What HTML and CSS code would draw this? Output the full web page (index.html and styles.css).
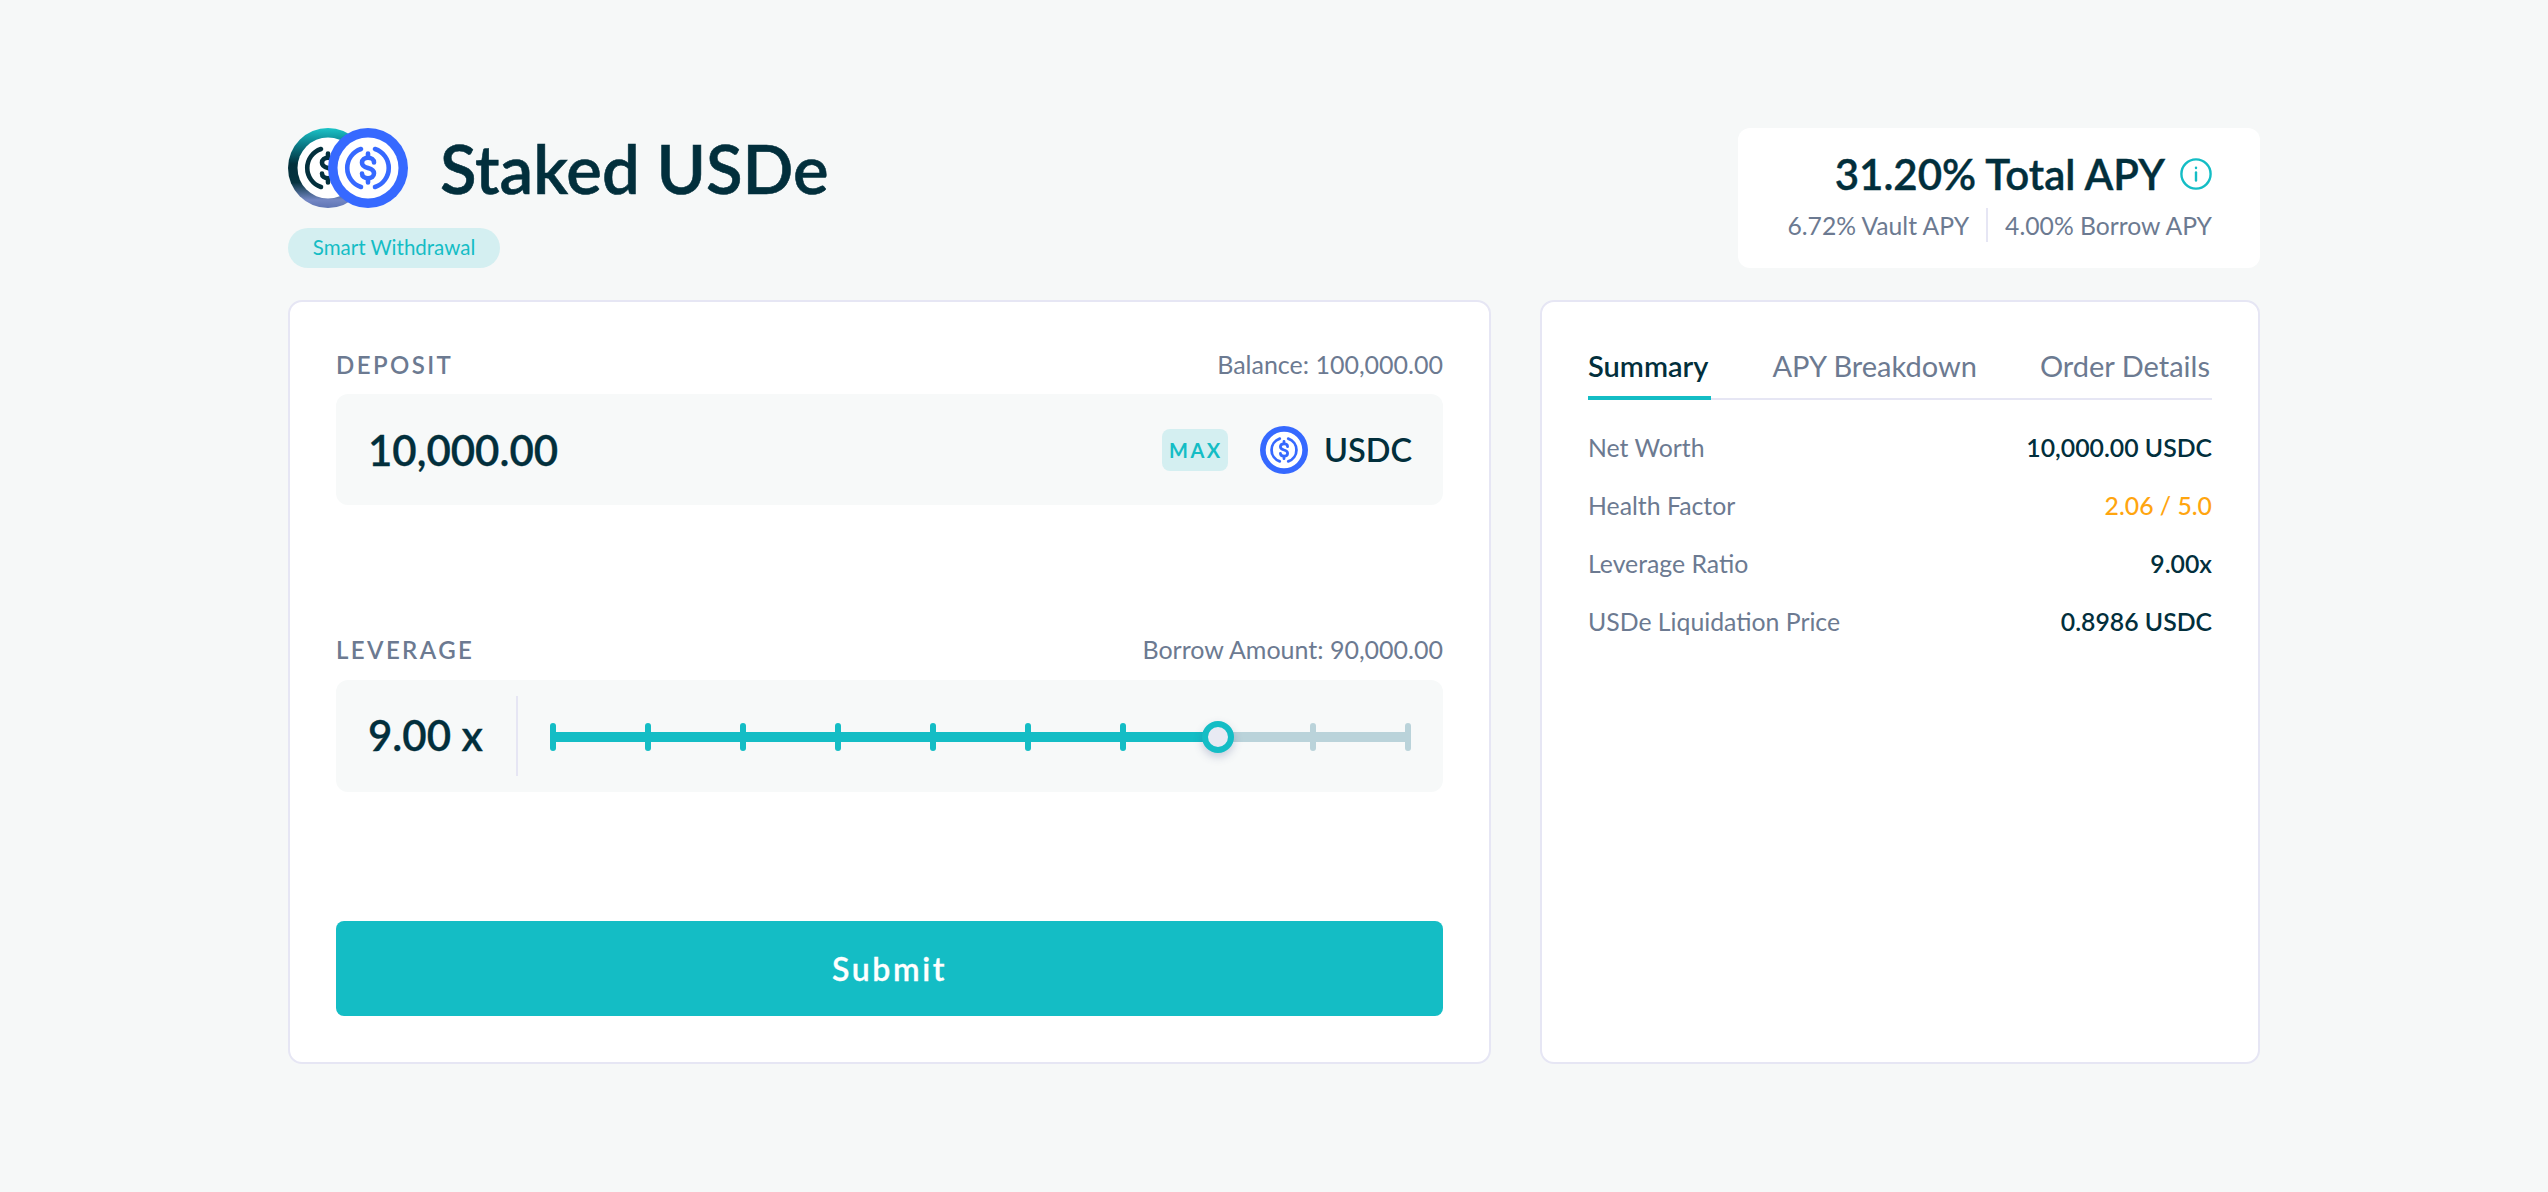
FILE: index.html
```html
<!DOCTYPE html>
<html lang="en">
<head>
    <meta charset="UTF-8">
    <meta name="viewport" content="width=device-width, initial-scale=1.0">
    <title>Staked USDe</title>
    <link rel="stylesheet" href="styles.css">
</head>
<body>
    <svg class="defs" width="0" height="0">
        <defs>
            <linearGradient id="ringGrad" x1="0" y1="0" x2="0" y2="1">
                <stop offset="0" stop-color="#1cc4c8"/>
                <stop offset="0.2" stop-color="#0b7f8b"/>
                <stop offset="0.45" stop-color="#02303c"/>
                <stop offset="0.68" stop-color="#06333f"/>
                <stop offset="0.9" stop-color="#7487c4"/>
                <stop offset="1" stop-color="#5f75b4"/>
            </linearGradient>
            <symbol id="usdc" viewBox="0 0 80 80">
                <circle cx="40" cy="40" r="40" fill="#3669ff"/>
                <circle cx="40" cy="40" r="30.5" fill="#fff"/>
                <g fill="none" stroke="#3669ff" stroke-width="4.6" stroke-linecap="round">
                    <path d="M33 21 A20 20 0 0 0 33 59"/>
                    <path d="M47 21 A20 20 0 0 1 47 59"/>
                    <path d="M46 34.5 C46 31.5 43.5 29.8 40 29.8 C36.5 29.8 34 31.5 34 34.7 C34 38 37 39.2 40 40 C43 40.8 46 42 46 45.3 C46 48.5 43.5 50.2 40 50.2 C36.5 50.2 34 48.5 34 45.5"/>
                    <path d="M40 25.5 V29 M40 51 V54.5"/>
                </g>
            </symbol>
            <symbol id="susde" viewBox="0 0 80 80">
                <circle cx="40" cy="40" r="40" fill="url(#ringGrad)"/>
                <circle cx="40" cy="40" r="30.5" fill="#fff"/>
                <g fill="none" stroke="#04303d" stroke-width="4.6" stroke-linecap="round">
                    <path d="M33 21 A20 20 0 0 0 33 59"/>
                    <path d="M46 34.5 C46 31.5 43.5 29.8 40 29.8 C36.5 29.8 34 31.5 34 34.7 C34 38 37 39.2 40 40 C43 40.8 46 42 46 45.3 C46 48.5 43.5 50.2 40 50.2 C36.5 50.2 34 48.5 34 45.5"/>
                    <path d="M40 25.5 V29 M40 51 V54.5"/>
                </g>
            </symbol>
        </defs>
    </svg>

    <div class="page">
        <!-- Header: vault name and APY card -->
        <header class="top">
            <div class="vault">
                <div class="vault-name">
                    <div class="coins">
                        <svg class="coin"><use href="#susde"/></svg>
                        <svg class="coin coin-front"><use href="#usdc"/></svg>
                    </div>
                    <h1>Staked USDe</h1>
                </div>
                <span class="tag">Smart Withdrawal</span>
            </div>
            <div class="apy-card">
                <div class="apy-total">
                    <span>31.20% Total APY</span>
                    <svg class="info" viewBox="0 0 32 32" fill="none" stroke="#14bdc5" stroke-width="2.4" stroke-linecap="round">
                        <circle cx="16" cy="16" r="14.6"/>
                        <path d="M16 14.5 V22.5"/>
                        <path d="M16 9.6 V10"/>
                    </svg>
                </div>
                <div class="apy-sub">
                    <span>6.72% Vault APY</span>
                    <i class="apy-sep"></i>
                    <span>4.00% Borrow APY</span>
                </div>
            </div>
        </header>

        <main class="panels">
            <!-- Left: order form -->
            <section class="card form-card">
                <div class="field-head">
                    <label>DEPOSIT</label>
                    <span>Balance: 100,000.00</span>
                </div>
                <div class="input-box">
                    <span class="amount">10,000.00</span>
                    <span class="max">MAX</span>
                    <svg class="coin-small"><use href="#usdc"/></svg>
                    <span class="token">USDC</span>
                </div>

                <div class="field-head leverage-head">
                    <label>LEVERAGE</label>
                    <span>Borrow Amount: 90,000.00</span>
                </div>
                <div class="leverage-box">
                    <span class="lev-value">9.00 x</span>
                    <div class="slider">
                        <div class="rail"></div>
                        <div class="rail rail-on"></div>
                        <div class="ticks">
                            <i class="on"></i><i class="on"></i><i class="on"></i><i class="on"></i><i class="on"></i>
                            <i class="on"></i><i class="on"></i><i class="on"></i><i></i><i></i>
                        </div>
                        <div class="thumb"></div>
                    </div>
                </div>

                <button class="submit">Submit</button>
            </section>

            <!-- Right: tabs and summary -->
            <section class="card info-card">
                <nav class="tabs">
                    <a class="tab active">Summary</a>
                    <a class="tab">APY Breakdown</a>
                    <a class="tab">Order Details</a>
                </nav>
                <dl class="rows">
                    <div class="row"><dt>Net Worth</dt><dd>10,000.00 USDC</dd></div>
                    <div class="row"><dt>Health Factor</dt><dd class="warn">2.06 / 5.0</dd></div>
                    <div class="row"><dt>Leverage Ratio</dt><dd>9.00x</dd></div>
                    <div class="row"><dt>USDe Liquidation Price</dt><dd>0.8986 USDC</dd></div>
                </dl>
            </section>
        </main>
    </div>
</body>
</html>
```

FILE: styles.css
```css
* {
    box-sizing: border-box;
}
body {
    font-family: Lato, "Open Sans", Arial, sans-serif;
    background-color: #f6f8f8;
    color: #022f3c;
    margin: 0;
    padding: 0;
}
.defs {
    position: absolute;
}
.page {
    width: 1972px;
    margin: 0 0 0 288px;
    padding-top: 128px;
}

/* Header */
.top {
    display: flex;
    justify-content: space-between;
    height: 172px;
}
.vault-name {
    display: flex;
    align-items: center;
    height: 80px;
}
.coins {
    display: flex;
    width: 120px;
    height: 80px;
}
.coin {
    width: 80px;
    height: 80px;
    flex: none;
}
.coin-front {
    margin-left: -40px;
}
h1 {
    margin: 0 0 0 32px;
    font-size: 67px;
    font-weight: 600;
    line-height: 80px;
    color: #022f3c;
    -webkit-text-stroke: 0.6px;
}
.tag {
    display: block;
    width: 212px;
    height: 40px;
    margin-top: 20px;
    border-radius: 20px;
    background-color: #d4eff1;
    color: #14bdc5;
    font-size: 20.5px;
    line-height: 39px;
    text-align: center;
}
.apy-card {
    width: 522px;
    height: 140px;
    padding: 24px 48px 0 0;
    background-color: #fff;
    border-radius: 12px;
    text-align: right;
}
.apy-total {
    display: flex;
    justify-content: flex-end;
    align-items: center;
    gap: 15px;
    height: 44px;
    font-size: 42px;
    font-weight: 600;
    -webkit-text-stroke: 0.4px;
}
.info {
    width: 32px;
    height: 32px;
}
.apy-sub {
    display: flex;
    justify-content: flex-end;
    align-items: center;
    gap: 17px;
    margin-top: 12px;
    color: #6c7a91;
    font-size: 24.7px;
}
.apy-sep {
    width: 2px;
    height: 34px;
    background-color: #e6e6f4;
}

/* Cards */
.panels {
    display: flex;
    justify-content: space-between;
}
.card {
    height: 764px;
    background-color: #fff;
    border: 2px solid #e6e6f4;
    border-radius: 14px;
}
.form-card {
    width: 1203px;
    padding: 0 46px;
}
.info-card {
    width: 720px;
    padding: 0 46px;
}

/* Form */
.field-head {
    display: flex;
    justify-content: space-between;
    align-items: center;
    height: 40px;
    margin-top: 42px;
    color: #6c7a91;
    font-size: 25px;
}
.field-head label {
    font-size: 24px;
    font-weight: 600;
    letter-spacing: 2.4px;
}
.leverage-head {
    margin-top: 124px;
}
.input-box {
    display: flex;
    align-items: center;
    height: 111px;
    margin-top: 10px;
    padding: 0 31px 0 32px;
    background-color: #f7f9f9;
    border-radius: 12px;
}
.amount {
    flex: 1;
    font-size: 42px;
    font-weight: 600;
    -webkit-text-stroke: 0.3px;
}
.max {
    width: 66px;
    height: 42px;
    padding-left: 2px;
    border-radius: 8px;
    background-color: #d4eff1;
    color: #14bdc5;
    font-size: 20px;
    font-weight: 700;
    line-height: 42px;
    letter-spacing: 2.5px;
    text-align: center;
}
.coin-small {
    width: 48px;
    height: 48px;
    margin: 0 16px 0 32px;
}
.token {
    font-size: 32.5px;
    font-weight: 600;
}
.leverage-box {
    display: flex;
    align-items: center;
    height: 112px;
    margin-top: 11px;
    padding-right: 32px;
    background-color: #f7f9f9;
    border-radius: 12px;
}
.lev-value {
    width: 182px;
    height: 80px;
    padding-left: 32px;
    border-right: 2px solid #e6e6f4;
    font-size: 42px;
    font-weight: 600;
    line-height: 78px;
    -webkit-text-stroke: 0.3px;
}
.slider {
    position: relative;
    flex: 1;
    height: 28px;
    margin: 2px 0 0 32px;
}
.rail {
    position: absolute;
    left: 0;
    right: 0;
    top: 9px;
    height: 10px;
    background-color: #bad3da;
}
.rail-on {
    right: auto;
    width: 668px;
    background-color: #14bdc5;
}
.ticks {
    position: relative;
    display: flex;
    justify-content: space-between;
}
.ticks i {
    width: 6px;
    height: 28px;
    border-radius: 3px;
    background-color: #bad3da;
}
.ticks i.on {
    background-color: #14bdc5;
}
.thumb {
    position: absolute;
    left: 652px;
    top: -2px;
    width: 32px;
    height: 32px;
    border: 6.5px solid #14bdc5;
    border-radius: 50%;
    background-color: #e8eaf3;
    box-shadow: 0 4px 8px rgba(60, 70, 130, 0.25);
}
.submit {
    display: block;
    width: 100%;
    height: 95px;
    margin-top: 129px;
    border: 0;
    border-radius: 8px;
    background-color: #14bdc5;
    color: #fff;
    font-family: inherit;
    font-size: 32px;
    font-weight: 600;
    letter-spacing: 2.6px;
    -webkit-text-stroke: 0.3px;
}

/* Tabs and summary */
.tabs {
    display: flex;
    justify-content: space-between;
    height: 98px;
    padding-top: 46px;
    border-bottom: 2px solid #e6e6f4;
}
.tab {
    height: 52px;
    padding-right: 2px;
    color: #6c7a91;
    font-size: 29px;
}
.tab.active {
    padding-right: 3px;
    border-bottom: 4px solid #14bdc5;
    color: #022f3c;
    font-weight: 600;
}
.rows {
    margin: 18px 0 0;
}
.row {
    display: flex;
    justify-content: space-between;
    align-items: center;
    height: 58px;
    font-size: 24.8px;
}
.row dt {
    color: #6c7a91;
}
.row dd {
    margin: 0;
    font-weight: 600;
}
.row dd.warn {
    color: #ffa50f;
    font-weight: 500;
}
```
